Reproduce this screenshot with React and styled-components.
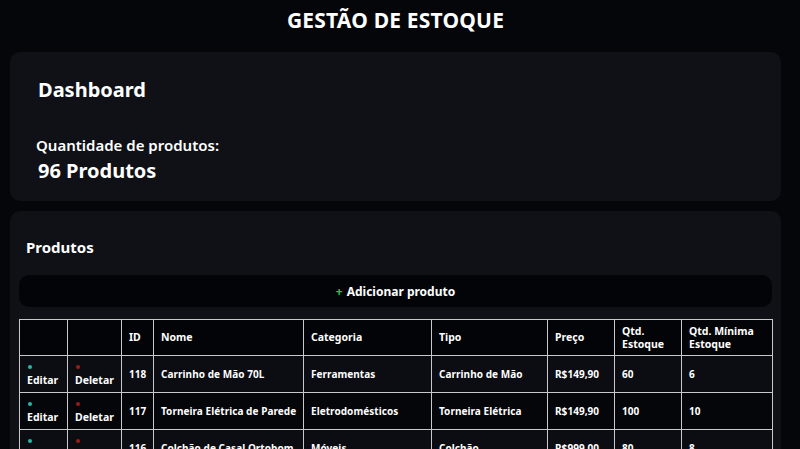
import React from "react";
import styled, { createGlobalStyle } from "styled-components";

const GlobalStyle = createGlobalStyle`
  html, body {
    margin: 0;
    padding: 0;
    background: #05060a;
    color: #ffffff;
    font-family: "Noto Sans", "Open Sans", Arial, sans-serif;
  }
  * { box-sizing: border-box; }
`;

const Page = styled.div`
  display: flex;
  flex-direction: column;
  gap: 10px;
  padding: 0 19px 20px 10px;
`;

const Header = styled.h1`
  margin: 0;
  padding: 8px 0 10px;
  text-align: center;
  font-size: 21px;
  line-height: 24px;
  font-weight: 700;
  letter-spacing: 0.2px;
`;

const Card = styled.section`
  background: #0f1117;
  border-radius: 10px;
  padding: ${({ $pad }) => $pad};
  display: flex;
  flex-direction: column;
`;

const CardTitle = styled.h2`
  margin: 0;
  font-size: ${({ $size }) => $size || "20px"};
  line-height: 24px;
  font-weight: 700;
  margin-left: ${({ $indent }) => $indent || "0"};
`;

const Label = styled.div`
  margin-top: 33px;
  font-size: 15px;
  line-height: 20px;
  font-weight: 600;
  margin-left: -2px;
`;

const Count = styled.div`
  margin-top: 4px;
  font-size: 20px;
  line-height: 24px;
  font-weight: 700;
`;

const AddButton = styled.button`
  margin-top: 16px;
  height: 32px;
  border: none;
  border-radius: 10px;
  background: #030407;
  color: #ffffff;
  font-family: inherit;
  font-size: 12px;
  font-weight: 700;
  display: flex;
  align-items: center;
  justify-content: center;
  gap: 4px;
  cursor: pointer;
`;

const Plus = styled.span`
  color: #22c55e;
  font-size: 12px;
`;

const Table = styled.table`
  margin-top: 12px;
  width: 100%;
  border-collapse: collapse;
  table-layout: fixed;
  font-size: 10.5px;
  font-weight: 700;
`;

const Th = styled.th`
  border: 1px solid #c9c9c9;
  background: #030407;
  text-align: left;
  padding: 0 6px 0 7px;
  height: 36px;
  line-height: 13px;
  font-weight: 700;
`;

const Row = styled.tr`
  background: ${({ $odd }) => ($odd ? "#0b0d12" : "#05060a")};
`;

const Td = styled.td`
  border: 1px solid #c9c9c9;
  padding: 0 6px 0 7px;
  height: 37px;
  line-height: 13px;
  font-size: 10px;
  letter-spacing: 0.05px;
  white-space: nowrap;
  overflow: hidden;
  vertical-align: middle;
`;

const ActionCell = styled.td`
  border: 1px solid #c9c9c9;
  padding: 4px 6px 0 7px;
  height: 37px;
  vertical-align: middle;
`;

const Dot = styled.span`
  display: block;
  width: 4px;
  height: 4px;
  border-radius: 50%;
  margin: 0 0 5px 1px;
  background: ${({ $color }) => $color};
`;

const ActionText = styled.span`
  display: block;
  line-height: 13px;
  font-size: 10.5px;
`;

const columns = [48, 54, 32, 150, 128, 116, 67, 67, 91];

const products = [
  { id: 118, nome: "Carrinho de Mão 70L", cat: "Ferramentas", tipo: "Carrinho de Mão", preco: "R$149,90", qtd: 60, min: 6 },
  { id: 117, nome: "Torneira Elétrica de Parede", cat: "Eletrodomésticos", tipo: "Torneira Elétrica", preco: "R$149,90", qtd: 100, min: 10 },
  { id: 116, nome: "Colchão de Casal Ortobom", cat: "Móveis", tipo: "Colchão", preco: "R$999,00", qtd: 80, min: 8 },
  { id: 115, nome: "Furadeira de Impacto", cat: "Ferramentas", tipo: "Furadeira", preco: "R$289,90", qtd: 45, min: 5 },
  { id: 114, nome: "Ventilador de Mesa 40cm", cat: "Eletrodomésticos", tipo: "Ventilador", preco: "R$179,90", qtd: 70, min: 7 },
];

export default function App() {
  return (
    <>
      <GlobalStyle />
      <Page>
        <Header>GESTÃO DE ESTOQUE</Header>
        <Card $pad="26px 28px 18px">
          <CardTitle>Dashboard</CardTitle>
          <Label>Quantidade de produtos:</Label>
          <Count>96 Produtos</Count>
        </Card>
        <Card $pad="24px 9px 20px">
          <CardTitle $size="15px" $indent="7px">Produtos</CardTitle>
          <AddButton>
            <Plus>+</Plus> Adicionar produto
          </AddButton>
          <Table>
            <colgroup>
              {columns.map((w, i) => (
                <col key={i} style={{ width: w }} />
              ))}
            </colgroup>
            <thead>
              <tr>
                <Th />
                <Th />
                <Th>ID</Th>
                <Th>Nome</Th>
                <Th>Categoria</Th>
                <Th>Tipo</Th>
                <Th>Preço</Th>
                <Th>Qtd. Estoque</Th>
                <Th>Qtd. Mínima Estoque</Th>
              </tr>
            </thead>
            <tbody>
              {products.map((p, i) => (
                <Row key={p.id} $odd={i % 2 === 0}>
                  <ActionCell>
                    <Dot $color="#2bb5a5" />
                    <ActionText>Editar</ActionText>
                  </ActionCell>
                  <ActionCell>
                    <Dot $color="#9b1c1c" />
                    <ActionText>Deletar</ActionText>
                  </ActionCell>
                  <Td>{p.id}</Td>
                  <Td>{p.nome}</Td>
                  <Td>{p.cat}</Td>
                  <Td>{p.tipo}</Td>
                  <Td>{p.preco}</Td>
                  <Td>{p.qtd}</Td>
                  <Td>{p.min}</Td>
                </Row>
              ))}
            </tbody>
          </Table>
        </Card>
      </Page>
    </>
  );
}
